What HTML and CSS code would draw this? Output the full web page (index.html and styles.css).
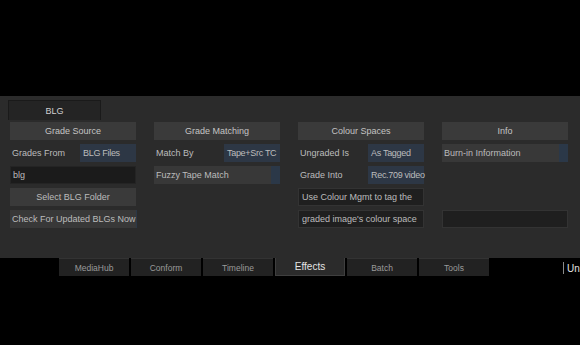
FILE: index.html
```html
<!DOCTYPE html>
<html>
<head>
<meta charset="utf-8">
<link rel="stylesheet" href="styles.css">
</head>
<body>
<div class="top"></div>
<div class="panel">
  <div class="tabrow"><div class="subtab">BLG</div></div>
  <div class="grid">
    <div class="col">
      <div class="hdr">Grade Source</div>
      <div class="pair"><span class="lbl">Grades From</span><span class="drop">BLG Files</span></div>
      <div class="input">blg</div>
      <div class="btn">Select BLG Folder</div>
      <div class="toggle"><span>Check For Updated BLGs Now</span><i></i></div>
    </div>
    <div class="col">
      <div class="hdr">Grade Matching</div>
      <div class="pair"><span class="lbl">Match By</span><span class="drop">Tape+Src TC</span></div>
      <div class="toggle"><span>Fuzzy Tape Match</span><i></i></div>
    </div>
    <div class="col">
      <div class="hdr">Colour Spaces</div>
      <div class="pair"><span class="lbl">Ungraded Is</span><span class="drop">As Tagged</span></div>
      <div class="pair"><span class="lbl">Grade Into</span><span class="drop">Rec.709 video</span></div>
      <div class="note">Use Colour Mgmt to tag the</div>
      <div class="note">graded image's colour space</div>
    </div>
    <div class="col">
      <div class="hdr">Info</div>
      <div class="toggle"><span>Burn-in Information</span><i></i></div>
      <div class="spacer"></div>
      <div class="note empty"></div>
    </div>
  </div>
</div>
<div class="bottom">
  <div class="tabs">
    <div class="tab">MediaHub</div>
    <div class="tab">Conform</div>
    <div class="tab">Timeline</div>
    <div class="tab active">Effects</div>
    <div class="tab">Batch</div>
    <div class="tab">Tools</div>
  </div>
  <div class="un">Un</div>
</div>
</body>
</html>
```
FILE: styles.css
```css
html, body {
  margin: 0;
  padding: 0;
  background: #000;
  width: 580px;
  height: 345px;
  overflow: hidden;
  font-family: "Liberation Sans", "DejaVu Sans", sans-serif;
  font-size: 9px;
  color: #bcbcbc;
}
.top { height: 96px; }
.panel {
  height: 162px;
  background: #2b2b2b;
  box-sizing: border-box;
  padding-top: 4px;
}
.tabrow { height: 22px; padding-left: 8px; }
.subtab {
  width: 93px;
  height: 20px;
  box-sizing: border-box;
  background: #242424;
  border: 1px solid #1a1a1a;
  border-bottom: none;
  display: flex;
  align-items: center;
  justify-content: center;
  color: #d0d0d0;
}
.grid {
  display: grid;
  grid-template-columns: repeat(4, 126px);
  column-gap: 18px;
  padding-left: 10px;
}
.col {
  display: flex;
  flex-direction: column;
  gap: 4px;
}
.col > div { height: 18px; box-sizing: border-box; }
.hdr {
  background: #3a3a3a;
  display: flex;
  align-items: center;
  justify-content: center;
  color: #c4c4c4;
}
.pair { display: flex; }
.lbl {
  flex: 1;
  display: flex;
  align-items: center;
  padding-left: 2px;
}
.drop {
  width: 56px;
  background: #2d3745;
  display: flex;
  align-items: center;
  padding-left: 3px;
  box-sizing: border-box;
  white-space: nowrap;
  letter-spacing: -0.3px;
}
.input {
  background: #1b1b1b;
  border: 1px solid #242424;
  display: flex;
  align-items: center;
  padding-left: 2px;
}
.btn {
  background: #3a3a3a;
  display: flex;
  align-items: center;
  justify-content: center;
}
.toggle {
  background: #383838;
  display: flex;
  align-items: stretch;
}
.toggle span {
  flex: 1;
  display: flex;
  align-items: center;
  padding-left: 2px;
  white-space: nowrap;
}
.toggle i {
  width: 9px;
  background: #2b3848;
}
.note {
  background: #1f1f1f;
  border: 1px solid #333;
  display: flex;
  align-items: center;
  padding-left: 3px;
  white-space: nowrap;
}
.spacer { height: 40px !important; }
.bottom {
  display: flex;
  height: 18px;
}
.tabs {
  display: flex;
  padding-left: 59px;
  gap: 2px;
  height: 18px;
}
.tab {
  width: 70px;
  height: 18px;
  box-sizing: border-box;
  background: #222;
  border-top: 1px solid #333;
  display: flex;
  align-items: center;
  justify-content: center;
  color: #9a9a9a;
  font-size: 8.5px;
}
.tab.active {
  background: #2b2b2b;
  border: 1px solid #3f3f3f;
  border-top: none;
  color: #e4e4e4;
  font-size: 10px;
}
.un {
  margin-left: 74px;
  margin-top: 4px;
  height: 12px;
  border-left: 1px solid #8a8a8a;
  padding-left: 3px;
  color: #e0e0e0;
  font-size: 10px;
  line-height: 14px;
}
```
